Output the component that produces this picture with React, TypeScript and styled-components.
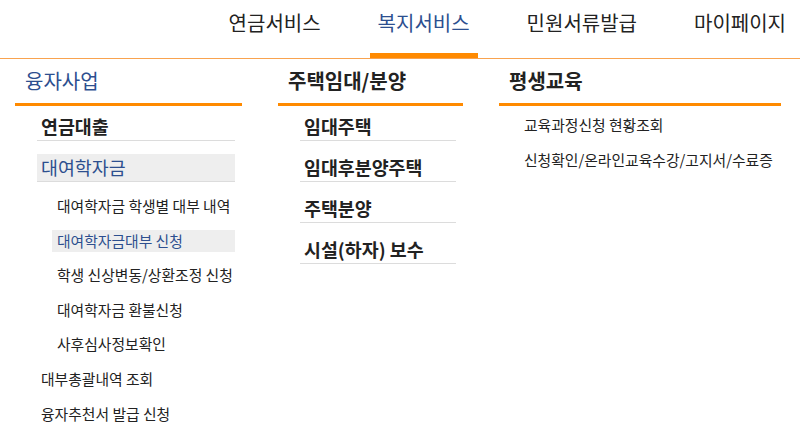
import React from "react";
import styled, { createGlobalStyle } from "styled-components";

const Global = createGlobalStyle`
  html, body { margin: 0; padding: 0; background: #fff; }
  body {
    font-family: "Noto Sans CJK KR", "Noto Sans", sans-serif;
    color: #222;
    width: 800px;
    height: 432px;
    overflow: hidden;
  }
  ul { list-style: none; margin: 0; padding: 0; }
`;

const ORANGE = "#ff8a00";
const BLUE = "#2d4f8f";
const DARK = "#222";

const Header = styled.header`
  height: 58px;
  border-bottom: 1px solid #f9a34f;
  display: flex;
  justify-content: flex-end;
  padding-right: 6px;
`;

const Nav = styled.nav`
  display: flex;
  gap: 41px;
  height: 100%;
`;

const NavItem = styled.a<{ $active?: boolean }>`
  position: relative;
  display: block;
  padding: 9px 8px 0;
  font-size: 20px;
  line-height: 28px;
  color: ${(p) => (p.$active ? BLUE : DARK)};
  text-decoration: none;
  white-space: nowrap;
  &::after {
    content: "";
    position: absolute;
    left: 0;
    right: 0;
    bottom: 0;
    height: 5px;
    background: ${(p) => (p.$active ? ORANGE : "transparent")};
  }
`;

const Main = styled.main`
  display: flex;
  gap: 36px;
  padding-left: 15px;
`;

const Column = styled.section<{ $w: number }>`
  flex: none;
  width: ${(p) => p.$w}px;
`;

const Heading = styled.h2<{ $active?: boolean }>`
  margin: 0;
  padding: 8px 10px;
  font-size: 20px;
  line-height: 28px;
  font-weight: ${(p) => (p.$active ? 400 : 700)};
  color: ${(p) => (p.$active ? BLUE : DARK)};
  border-bottom: 3px solid ${ORANGE};
  white-space: nowrap;
`;

const MenuList = styled.ul`
  margin: 7px 7px 0 22px;
`;

const MenuItem = styled.li`
  & + & { margin-top: 13px; }
`;

const MenuLink = styled.a<{ $active?: boolean }>`
  display: block;
  padding: 0 4px;
  height: 27px;
  line-height: 27px;
  font-size: 18.4px;
  font-weight: ${(p) => (p.$active ? 400 : 700)};
  color: ${(p) => (p.$active ? BLUE : DARK)};
  background: ${(p) => (p.$active ? "#eeeeee" : "transparent")};
  border-bottom: 1px solid #dcdcdc;
  text-decoration: none;
  white-space: nowrap;
`;

const SmallLink = styled.a<{ $active?: boolean; $indent?: number }>`
  display: block;
  padding: 0 ${(p) => p.$indent ?? 4}px;
  height: 22px;
  line-height: 22px;
  font-size: 14.8px;
  color: ${(p) => (p.$active ? BLUE : DARK)};
  background: ${(p) => (p.$active ? "#eeeeee" : "transparent")};
  text-decoration: none;
  white-space: nowrap;
`;

const SubList = styled.ul`
  margin: 13px 0 0 15px;
`;

const SubItem = styled.li`
  & + & { margin-top: 12.6px; }
`;

const PlainList = styled.ul`
  margin: 8px 0 0 20px;
`;

const navItems = ["연금서비스", "복지서비스", "민원서류발급", "마이페이지"];

const loanSub = [
  { label: "대여학자금 학생별 대부 내역" },
  { label: "대여학자금대부 신청", active: true },
  { label: "학생 신상변동/상환조정 신청" },
  { label: "대여학자금 환불신청" },
  { label: "사후심사정보확인" },
];

const housing = ["임대주택", "임대후분양주택", "주택분양", "시설(하자) 보수"];
const education = ["교육과정신청 현황조회", "신청확인/온라인교육수강/고지서/수료증"];

export default function App() {
  return (
    <>
      <Global />
      <Header>
        <Nav>
          {navItems.map((n) => (
            <NavItem key={n} $active={n === "복지서비스"}>
              {n}
            </NavItem>
          ))}
        </Nav>
      </Header>
      <Main>
        <Column $w={227}>
          <Heading $active>융자사업</Heading>
          <MenuList>
            <MenuItem>
              <MenuLink>연금대출</MenuLink>
            </MenuItem>
            <MenuItem>
              <MenuLink $active>대여학자금</MenuLink>
              <SubList>
                {loanSub.map((s) => (
                  <SubItem key={s.label}>
                    <SmallLink $active={s.active} $indent={5}>
                      {s.label}
                    </SmallLink>
                  </SubItem>
                ))}
              </SubList>
            </MenuItem>
            <MenuItem>
              <SmallLink>대부총괄내역 조회</SmallLink>
            </MenuItem>
            <MenuItem>
              <SmallLink>융자추천서 발급 신청</SmallLink>
            </MenuItem>
          </MenuList>
        </Column>
        <Column $w={185}>
          <Heading>주택임대/분양</Heading>
          <MenuList>
            {housing.map((h) => (
              <MenuItem key={h}>
                <MenuLink>{h}</MenuLink>
              </MenuItem>
            ))}
          </MenuList>
        </Column>
        <Column $w={282}>
          <Heading>평생교육</Heading>
          <PlainList>
            {education.map((e) => (
              <SubItem key={e}>
                <SmallLink $indent={5}>{e}</SmallLink>
              </SubItem>
            ))}
          </PlainList>
        </Column>
      </Main>
    </>
  );
}
